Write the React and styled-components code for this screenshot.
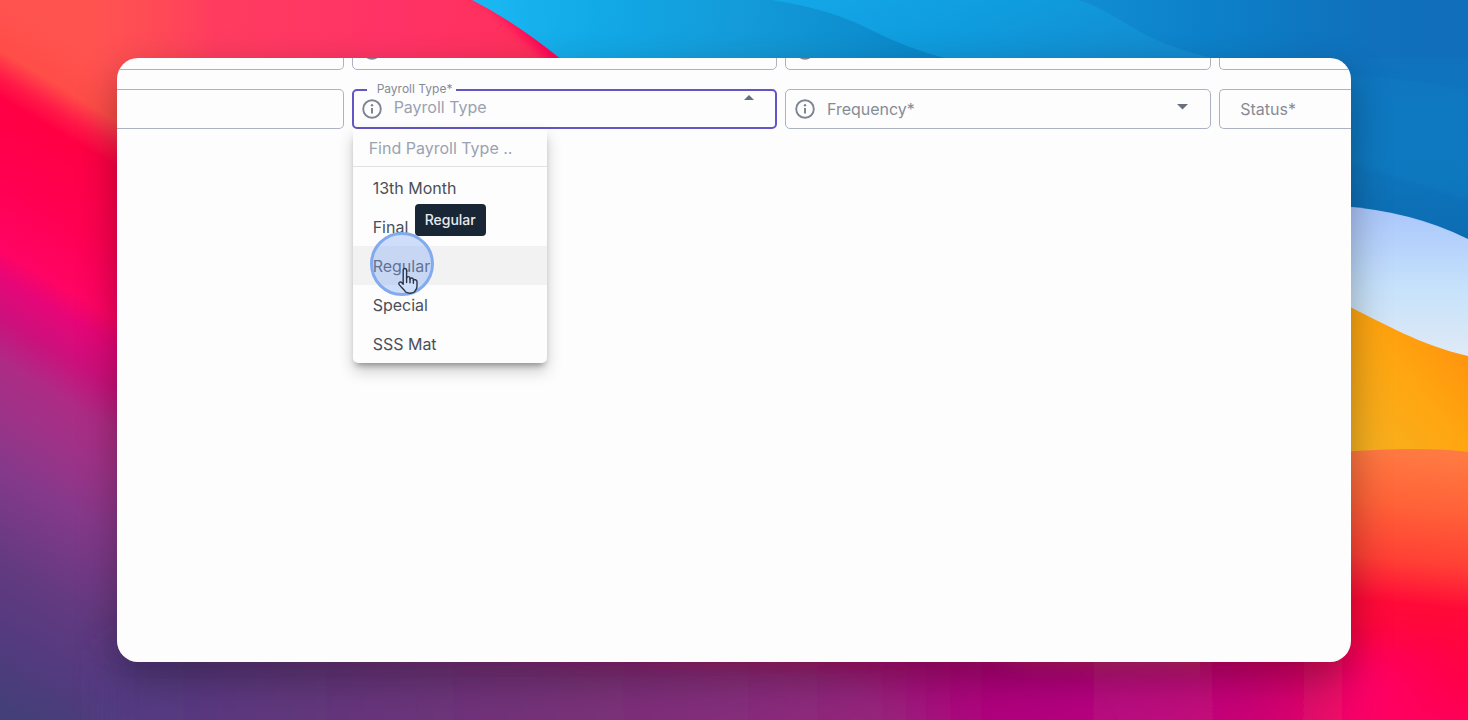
import styled, { createGlobalStyle } from "styled-components";
import { useState } from "react";

const payrollTypes = ["13th Month", "Final", "Regular", "Special", "SSS Mat"];

function Wallpaper() {
  return (
    <WallpaperSvg
      viewBox="0 0 1468 720"
      preserveAspectRatio="none"
      aria-hidden="true"
    >
      <defs>
        <linearGradient
          id="left"
          gradientUnits="userSpaceOnUse"
          x1="0"
          y1="0"
          x2="-318"
          y2="529"
        >
          <stop offset="0" stopColor="#ff5350" />
          <stop offset="0.07" stopColor="#ff4d48" />
          <stop offset="0.105" stopColor="#ff1c48" />
          <stop offset="0.135" stopColor="#ff0044" />
          <stop offset="0.25" stopColor="#ff0052" />
          <stop offset="0.345" stopColor="#ff0464" />
          <stop offset="0.385" stopColor="#e60678" />
          <stop offset="0.44" stopColor="#cc107c" />
          <stop offset="0.5" stopColor="#ae2b84" />
          <stop offset="0.56" stopColor="#a03288" />
          <stop offset="0.65" stopColor="#85398a" />
          <stop offset="0.78" stopColor="#633a80" />
          <stop offset="0.87" stopColor="#553a80" />
          <stop offset="0.98" stopColor="#443f78" />
        </linearGradient>
        <linearGradient id="top" x1="0" y1="0" x2="1" y2="0">
          <stop offset="0" stopColor="#ff4858" stopOpacity="0" />
          <stop offset="0.25" stopColor="#ff3c60" />
          <stop offset="0.6" stopColor="#ff3366" />
          <stop offset="1" stopColor="#ff2e58" />
        </linearGradient>
        <linearGradient id="bottom" x1="0" y1="0" x2="1" y2="0">
          <stop offset="0" stopColor="#523b84" />
          <stop offset="0.14" stopColor="#62377c" />
          <stop offset="0.35" stopColor="#7a3078" />
          <stop offset="0.45" stopColor="#862d7c" />
          <stop offset="0.56" stopColor="#98247c" />
          <stop offset="0.635" stopColor="#b00080" />
          <stop offset="0.76" stopColor="#be0c7e" />
          <stop offset="0.82" stopColor="#cc0074" />
          <stop offset="0.87" stopColor="#e60a68" />
          <stop offset="0.9" stopColor="#ff0066" />
          <stop offset="0.98" stopColor="#ff0055" stopOpacity="0" />
        </linearGradient>
        <linearGradient
          id="sky"
          gradientUnits="userSpaceOnUse"
          x1="480"
          y1="0"
          x2="950"
          y2="30"
        >
          <stop offset="0" stopColor="#1ab8f2" />
          <stop offset="0.25" stopColor="#12a9e7" />
          <stop offset="0.55" stopColor="#149bd9" />
          <stop offset="1" stopColor="#0985c7" />
        </linearGradient>
        <linearGradient id="skyBack" x1="0" y1="0" x2="1" y2="0.3">
          <stop offset="0" stopColor="#14a8e8" />
          <stop offset="0.5" stopColor="#0f9cde" />
          <stop offset="1" stopColor="#138cd0" />
        </linearGradient>
        <linearGradient id="deep" x1="0" y1="0" x2="1" y2="0">
          <stop offset="0" stopColor="#118dd2" />
          <stop offset="0.35" stopColor="#0c80c9" />
          <stop offset="0.75" stopColor="#1070bb" />
          <stop offset="1" stopColor="#106eba" />
        </linearGradient>
        <linearGradient id="side" x1="0" y1="0" x2="0" y2="1">
          <stop offset="0" stopColor="#1072bd" />
          <stop offset="0.5" stopColor="#0f76bd" />
          <stop offset="1" stopColor="#0b6ab0" />
        </linearGradient>
        <linearGradient id="ice" x1="0" y1="0" x2="0" y2="1">
          <stop offset="0" stopColor="#aac6fa" />
          <stop offset="0.2" stopColor="#b4d0fc" />
          <stop offset="0.5" stopColor="#c6e2fb" />
          <stop offset="0.8" stopColor="#d8e7f7" />
          <stop offset="1" stopColor="#e4edf8" />
        </linearGradient>
        <linearGradient id="orange" x1="0" y1="1" x2="1" y2="0">
          <stop offset="0" stopColor="#f5b424" />
          <stop offset="0.55" stopColor="#ffa510" />
          <stop offset="1" stopColor="#ff8a0c" />
        </linearGradient>
        <linearGradient
          id="coral"
          gradientUnits="userSpaceOnUse"
          x1="1400"
          y1="450"
          x2="1370"
          y2="720"
        >
          <stop offset="0" stopColor="#ff7a42" />
          <stop offset="0.2" stopColor="#ff6238" />
          <stop offset="0.4" stopColor="#ff4035" />
          <stop offset="0.56" stopColor="#ff0a38" />
          <stop offset="0.82" stopColor="#ff0045" />
          <stop offset="1" stopColor="#ff005c" />
        </linearGradient>
        <filter id="blur3" x="-20%" y="-20%" width="140%" height="140%">
          <feGaussianBlur stdDeviation="3" />
        </filter>
        <filter id="blur8" x="-50%" y="-50%" width="200%" height="200%">
          <feGaussianBlur stdDeviation="6" />
        </filter>
        <filter id="blur18" x="-20%" y="-50%" width="140%" height="200%">
          <feGaussianBlur stdDeviation="18" />
        </filter>
      </defs>

      <rect width="1468" height="720" fill="url(#left)" />
      <rect x="90" width="500" height="90" fill="url(#top)" />
      <path
        d="M468 -24 Q520 15 576 76"
        fill="none"
        stroke="#ff0055"
        strokeWidth="18"
        filter="url(#blur8)"
      />

      <path
        d="M472 0 Q515 22 562 60 L700 240 H1468 V0 Z"
        fill="url(#sky)"
      />
      <path
        d="M772 0 C810 6 838 14 865 27 C892 41 920 52 952 60 H1240 V0 Z"
        fill="url(#skyBack)"
      />
      <path
        d="M1079 0 C1104 8 1125 24 1146 35 C1170 47 1192 54 1222 60 H1468 V0 Z"
        fill="url(#deep)"
      />
      <rect x="1300" y="58" width="168" height="200" fill="url(#side)" />
      <path
        d="M1340 75 Q1410 78 1468 90 V200 L1340 160 Z"
        fill="#1180c6"
        opacity="0.35"
        filter="url(#blur3)"
      />

      <path d="M1340 206 Q1412 211 1468 239 V370 H1340 Z" fill="url(#ice)" />
      <path
        d="M1340 302 C1385 324 1420 345 1468 356 V460 H1340 Z"
        fill="url(#orange)"
      />
      <path
        d="M1200 470 L1340 452 Q1425 446 1468 452 V720 H1200 Z"
        fill="url(#coral)"
      />
      <rect
        x="110"
        y="650"
        width="1400"
        height="150"
        fill="url(#bottom)"
        filter="url(#blur18)"
      />
      <path
        d="M800 640 H980 L1090 735 H980 Z"
        fill="#b3007c"
        opacity="0.5"
        filter="url(#blur18)"
      />
    </WallpaperSvg>
  );
}

function InfoIcon() {
  return (
    <Icon width="20" height="20" viewBox="0 0 20 20" aria-hidden="true">
      <circle
        cx="10"
        cy="10"
        r="8.8"
        fill="none"
        stroke="#7d8594"
        strokeWidth="1.9"
      />
      <path d="M10 9V14.4" stroke="#7d8594" strokeWidth="2" />
      <circle cx="10" cy="6.3" r="1.2" fill="#7d8594" />
    </Icon>
  );
}

function SelectField({ id, label, icon, edge }) {
  return (
    <Field $edge={edge} $icon={icon}>
      {icon && <InfoIcon />}
      <SelectBox>
        <FieldLabel htmlFor={id}>{label}</FieldLabel>
        <Select id={id} defaultValue="">
          <option value="" aria-label={label} />
        </Select>
      </SelectBox>
      <Caret width="11" height="6" viewBox="0 0 11 6" aria-hidden="true">
        <path d="M0 0H11L5.5 5.5Z" fill="#66707f" />
      </Caret>
    </Field>
  );
}

function HandCursor() {
  return (
    <Hand width="22" height="28" viewBox="0 0 22 28" aria-hidden="true">
      <path
        d="M6.2 17.2V3.4C6.2 0.8 9.6 0.8 9.6 3.4V11.2C9.8 9 13 9.2 13 11.6V12.2C13.4 10.4 16.4 10.6 16.4 12.8V13.6C17 12 20 12.4 20 14.8V19.5C20 22.5 17.8 23.6 17.4 25Q13 27.5 8.6 25C7.8 23 4.6 20.8 2.4 17.8C0.8 15.6 3.2 14 5 15.8Z"
        fill="#cfdefa"
        stroke="#2b3446"
        strokeWidth="1.4"
        strokeLinejoin="round"
      />
      <path
        d="M9.6 10.5V15.5M13 11.6V15.8M16.4 13V16.2"
        stroke="#2b3446"
        strokeWidth="1.4"
        strokeLinecap="round"
      />
    </Hand>
  );
}

function PayrollTypeField() {
  const [hovered, setHovered] = useState("Regular");

  return (
    <Field $icon $focused>
      <InfoIcon />
      <NotchLabel htmlFor="payroll-type">Payroll Type*</NotchLabel>
      <TextInput
        id="payroll-type"
        role="combobox"
        aria-expanded="true"
        aria-controls="payroll-type-list"
        placeholder="Payroll Type"
      />
      <OpenCaret width="10" height="5" viewBox="0 0 10 5" aria-hidden="true">
        <path d="M0 5H10L5 0Z" fill="#66707f" />
      </OpenCaret>

      <Menu>
        <SearchInput
          type="text"
          aria-label="Find Payroll Type"
          placeholder="Find Payroll Type .."
        />
        <Options id="payroll-type-list" role="listbox">
          {payrollTypes.map((type) => (
            <Option
              key={type}
              type="button"
              role="option"
              aria-selected={hovered === type}
              $hovered={hovered === type}
              onMouseEnter={() => setHovered(type)}
            >
              {type}
              {hovered === type && <Tooltip role="tooltip">{type}</Tooltip>}
            </Option>
          ))}
        </Options>
        <ClickRing>
          <HandCursor />
        </ClickRing>
      </Menu>
    </Field>
  );
}

function App() {
  return (
    <Desktop>
      <GlobalStyle />
      <Wallpaper />
      <AppWindow>
        <Form>
          <Field $edge="left" />
          <Field $icon>
            <InfoIcon />
          </Field>
          <Field $icon>
            <InfoIcon />
          </Field>
          <Field $edge="right" />

          <Field $edge="left" />
          <PayrollTypeField />
          <SelectField id="frequency" label="Frequency*" icon />
          <SelectField id="status" label="Status*" edge="right" />
        </Form>
      </AppWindow>
    </Desktop>
  );
}

export default App;

const GlobalStyle = createGlobalStyle`
  * {
    box-sizing: border-box;
  }

  body {
    margin: 0;
    font-family: Inter, "Liberation Sans", sans-serif;
  }

  button,
  input,
  select {
    font: inherit;
  }
`;

const Desktop = styled.div`
  position: relative;
  display: flex;
  min-height: 100vh;
  padding: 58px 117px;
  overflow: hidden;
`;

const WallpaperSvg = styled.svg`
  position: absolute;
  inset: 0;
  width: 100%;
  height: 100%;
`;

const AppWindow = styled.main`
  position: relative;
  flex: 1;
  min-width: 0;
  background: #fdfdfd;
  border-radius: 21px;
  box-shadow: 0 16px 40px rgba(0, 0, 0, 0.32);
  overflow: hidden;
`;

/* the form is scrolled, so its first row is partly out of view */
const Form = styled.form`
  display: grid;
  grid-template-columns: 227fr 426fr 427fr 132fr;
  grid-auto-rows: 40px;
  gap: 19px 8px;
  margin-top: -28px;
`;

const Field = styled.div`
  position: relative;
  display: flex;
  align-items: center;
  min-width: 0;
  gap: 12px;
  padding-left: ${(props) => (props.$icon ? "9px" : "20px")};
  padding-right: 22px;
  border: 1px solid #aab3bf;
  border-radius: 5px;
  font-size: 16px;
  line-height: 20px;

  ${(props) =>
    props.$focused &&
    `
    padding-left: 8px;
    padding-right: 21px;
    border: 2px solid #6255c4;
  `}

  ${(props) =>
    props.$edge === "left" &&
    `
    border-left: 0;
    border-top-left-radius: 0;
    border-bottom-left-radius: 0;
  `}

  ${(props) =>
    props.$edge === "right" &&
    `
    border-right: 0;
    padding-right: 0;
    border-top-right-radius: 0;
    border-bottom-right-radius: 0;

    > svg {
      display: none;
    }
  `}
`;

const Icon = styled.svg`
  flex: none;
`;

const SelectBox = styled.div`
  display: grid;
  flex: 1;
  align-items: center;
`;

const FieldLabel = styled.label`
  grid-area: 1 / 1;
  color: #858b96;
  pointer-events: none;
`;

const Select = styled.select`
  grid-area: 1 / 1;
  width: 100%;
  height: 36px;
  border: 0;
  background: transparent;
  appearance: none;
  outline: none;
`;

const Caret = styled.svg`
  flex: none;
  margin-bottom: 4px;
`;

const OpenCaret = styled.svg`
  flex: none;
  align-self: flex-start;
  margin-top: 4px;
`;

const NotchLabel = styled.label`
  position: absolute;
  top: -10px;
  left: 13px;
  padding: 0 4px 0 10px;
  background: #fdfdfd;
  color: #858b96;
  font-size: 12px;
  line-height: 16px;
`;

const TextInput = styled.input`
  flex: 1;
  min-width: 0;
  padding: 0 0 4px;
  border: 0;
  background: transparent;
  color: #4b4f58;
  outline: none;

  &::placeholder {
    color: #9aa2b2;
    opacity: 1;
  }
`;

const Menu = styled.div`
  position: absolute;
  z-index: 1;
  top: calc(100% + 2px);
  left: -1px;
  width: 194px;
  background: #fdfdfd;
  border-radius: 0 0 5px 5px;
  box-shadow:
    0 5px 6px -3px rgba(0, 0, 0, 0.35),
    0 8px 16px rgba(0, 0, 0, 0.2);
`;

const SearchInput = styled.input`
  display: block;
  width: 100%;
  height: 38px;
  padding: 0 16px;
  border: 0;
  border-bottom: 1px solid #dfe1e5;
  background: #fdfdfd;
  outline: none;

  &::placeholder {
    color: #9aa2b2;
    opacity: 1;
  }
`;

const Options = styled.div`
  display: flex;
  flex-direction: column;
  padding-top: 1px;
`;

const Option = styled.button`
  position: relative;
  height: 39px;
  padding: 0 20px;
  border: 0;
  background: ${(props) => (props.$hovered ? "#f2f2f2" : "transparent")};
  color: #4b4f58;
  text-align: left;
  cursor: pointer;

  &:last-child {
    border-radius: 0 0 5px 5px;
  }
`;

const Tooltip = styled.span`
  position: absolute;
  bottom: calc(100% + 10px);
  left: 62px;
  padding: 6px 10px;
  background: #192636;
  border-radius: 4px;
  color: #e8ebef;
  font-size: 14px;
  font-weight: 500;
  line-height: 20px;
`;

const ClickRing = styled.div`
  position: absolute;
  top: 103px;
  left: 17px;
  width: 64px;
  height: 64px;
  background: rgba(130, 170, 245, 0.38);
  border: 3px solid #82abef;
  border-radius: 50%;
  pointer-events: none;
`;

const Hand = styled.svg`
  position: absolute;
  top: 32px;
  left: 24px;
`;
